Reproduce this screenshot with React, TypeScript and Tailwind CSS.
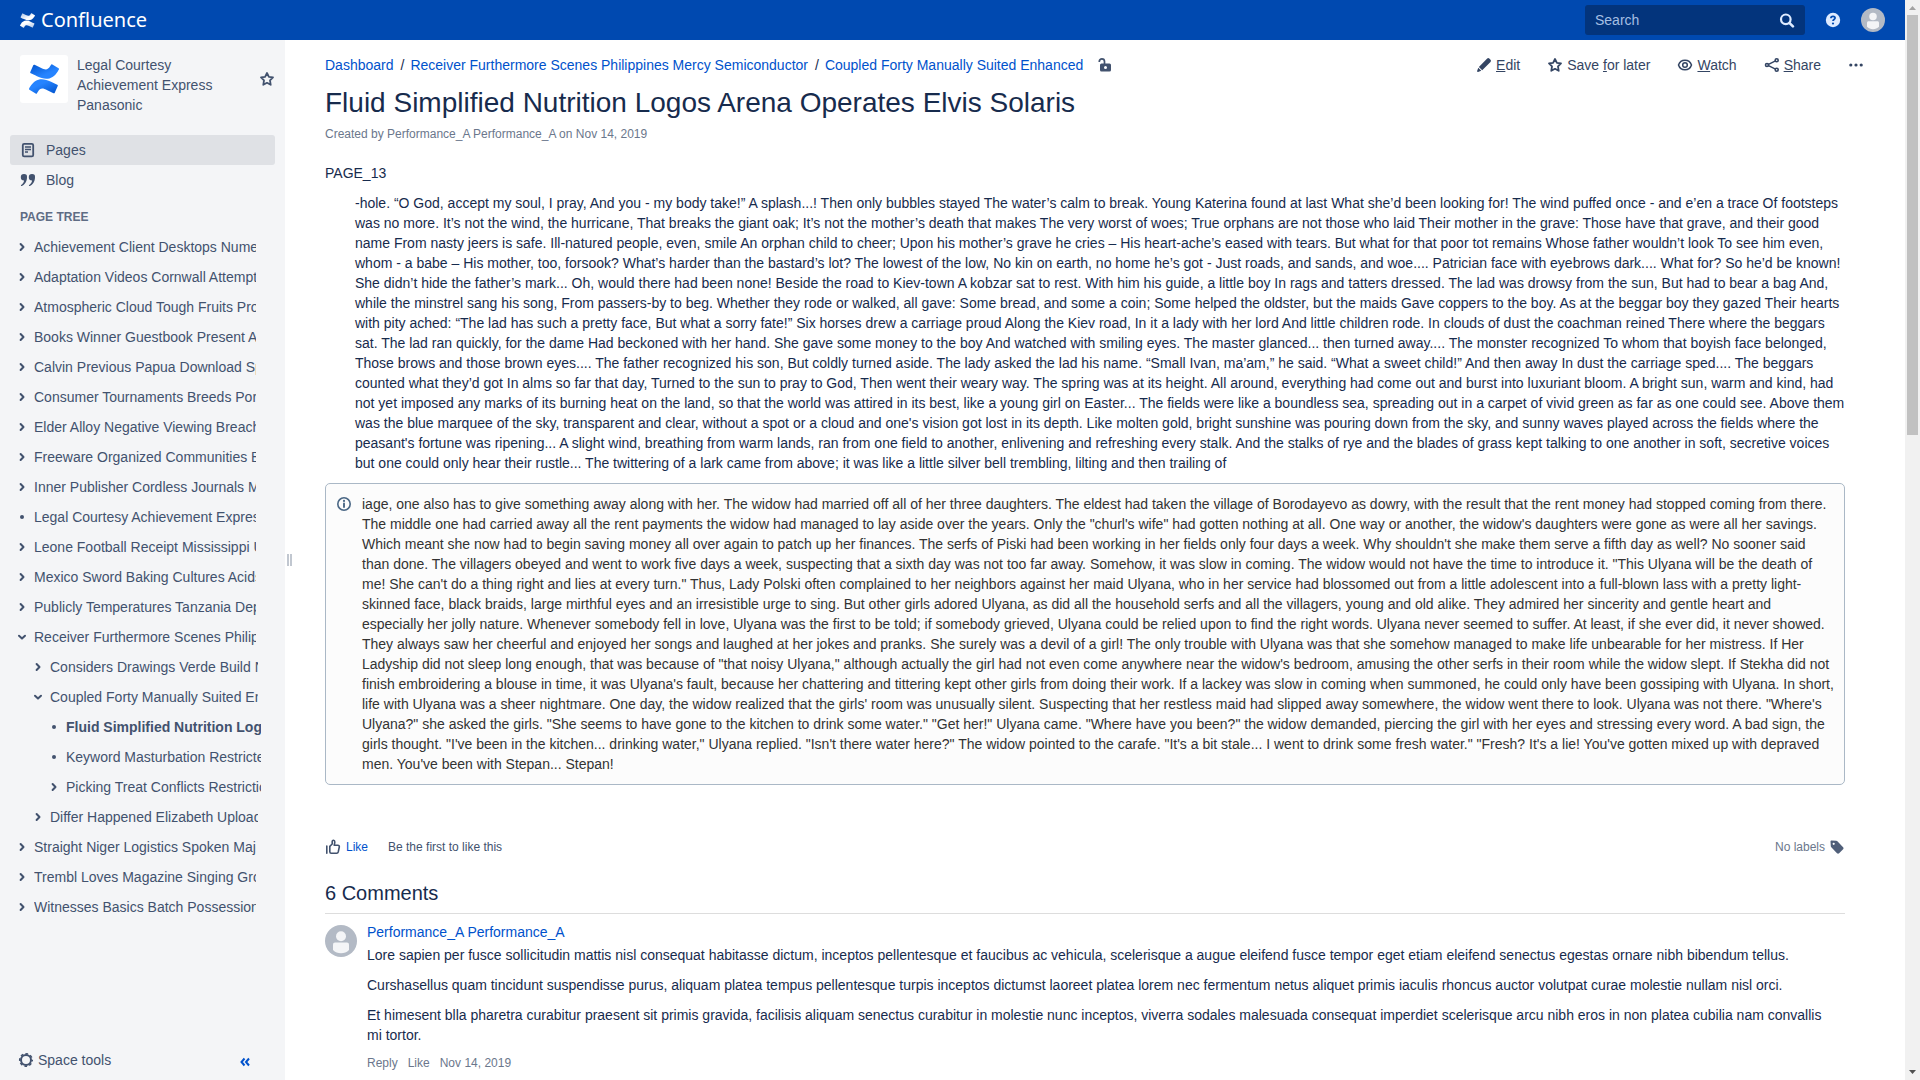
import React, { useId } from "react";

const LOWER =
  "M.87 18.257c-.248.382-.53.875-.763 1.245a.764.764 0 0 0 .255 1.04l4.965 3.054a.764.764 0 0 0 1.058-.26c.199-.332.454-.763.733-1.221 1.967-3.247 3.945-2.853 7.508-1.146l4.957 2.337a.764.764 0 0 0 1.028-.382l2.364-5.346a.764.764 0 0 0-.382-1 599.851 599.851 0 0 1-4.965-2.361C10.911 10.97 5.224 11.185.87 18.257z";
const UPPER =
  "M23.131 5.743c.249-.405.531-.875.764-1.25a.764.764 0 0 0-.256-1.034L18.675.404a.764.764 0 0 0-1.058.26c-.195.335-.451.763-.734 1.225-1.966 3.246-3.945 2.85-7.508 1.146L4.437.694a.764.764 0 0 0-1.027.382L1.046 6.422a.764.764 0 0 0 .382 1c1.039.49 3.105 1.467 4.965 2.361 6.698 3.246 12.392 3.029 16.738-4.04z";

function ConfluenceMark({ from, to, className }: { from: string; to: string; className: string }) {
  const id = useId();
  return (
    <svg viewBox="0 0 24 24" className={className} aria-hidden="true">
      <defs>
        <linearGradient id={id + "a"} x1="1" y1="1" x2="0.4" y2="0.35">
          <stop offset="0" stopColor={from} />
          <stop offset="1" stopColor={to} />
        </linearGradient>
        <linearGradient id={id + "b"} x1="0" y1="0" x2="0.6" y2="0.65">
          <stop offset="0" stopColor={from} />
          <stop offset="1" stopColor={to} />
        </linearGradient>
      </defs>
      <path d={LOWER} fill={`url(#${id}a)`} />
      <path d={UPPER} fill={`url(#${id}b)`} />
    </svg>
  );
}

function Icon({ children, className = "" }: { children: React.ReactNode; className?: string }) {
  return (
    <svg
      viewBox="0 0 16 16"
      className={"size-4 shrink-0 " + className}
      fill="none"
      stroke="currentColor"
      strokeWidth="1.6"
      strokeLinecap="round"
      strokeLinejoin="round"
      aria-hidden="true"
    >
      {children}
    </svg>
  );
}

const StarIcon = () => (
  <Icon>
    <path d="M8 2l1.9 3.800 4.100.6-3 2.900.7 4.500L8 11.800l-3.700 2 .7-4.500-3-2.900 4.100-.6z" strokeWidth="1.800" />
  </Icon>
);
const PageIcon = () => (
  <Icon>
    <rect x="2.800" y="1.800" width="10.400" height="12.600" rx="1.400" strokeWidth="1.800" />
    <path d="M5 5h6M5 7.500h6M5 10h3" strokeWidth="1.400" strokeLinecap="butt" />
  </Icon>
);
const QuoteIcon = () => (
  <Icon>
    <path
      stroke="none"
      fill="currentColor"
      d="M4 2a3 3 0 0 1 3 3.3C7 9.500 4.800 12.700 1.700 14c-.7.200-1-.6-.5-1 1.700-1.200 2.700-2.700 2.900-4.500A3.100 3.100 0 0 1 4 2zM12 2a3 3 0 0 1 3 3.300c0 4.200-2.200 7.400-5.300 8.700-.7.200-1-.6-.5-1 1.700-1.200 2.700-2.700 2.900-4.500A3.100 3.100 0 0 1 12 2z"
    />
  </Icon>
);
const PencilIcon = () => (
  <Icon>
    <path
      stroke="none"
      fill="currentColor"
      d="M11.200 1.600a1.500 1.500 0 0 1 2.100 0l1.200 1.200a1.500 1.500 0 0 1 0 2.100l-8.300 8.300-3.300-3.300zM2.300 10.700l3 3L2 14.900c-.6.200-1.100-.3-.9-.9z"
    />
  </Icon>
);
const EyeIcon = () => (
  <Icon>
    <path d="M1.500 8C2.500 5 5 3.200 8 3.200S13.500 5 14.500 8c-1 3-3.500 4.800-6.500 4.800S2.500 11 1.500 8z" strokeWidth="1.500" />
    <circle cx="8" cy="8" r="2.300" strokeWidth="1.500" />
  </Icon>
);
const ShareIcon = () => (
  <Icon>
    <path d="M4.500 7.300l6.500-3.200M4.500 8.700l6.500 3.200" strokeWidth="1.500" />
    <circle cx="3" cy="8" r="1.500" />
    <circle cx="12.700" cy="3.200" r="1.500" />
    <circle cx="12.700" cy="12.800" r="1.500" />
  </Icon>
);
const MoreIcon = () => (
  <Icon>
    <g stroke="none" fill="currentColor">
      <circle cx="2.800" cy="8" r="1.600" />
      <circle cx="8" cy="8" r="1.600" />
      <circle cx="13.200" cy="8" r="1.600" />
    </g>
  </Icon>
);
const UnlockIcon = () => (
  <Icon>
    <path d="M2.300 5V4.400a2.600 2.600 0 0 1 5.200 0V7" strokeWidth="1.700" strokeLinecap="butt" />
    <path
      stroke="none"
      fill="currentColor"
      fillRule="evenodd"
      d="M4.500 6.500h8a1.500 1.500 0 0 1 1.500 1.500v5a1.500 1.500 0 0 1-1.500 1.500h-8A1.500 1.500 0 0 1 3 13V8a1.500 1.500 0 0 1 1.500-1.500zM8.500 9a1.500 1.500 0 1 0 0 3 1.500 1.500 0 0 0 0-3z"
    />
  </Icon>
);
const InfoIcon = () => (
  <Icon>
    <circle cx="8" cy="8" r="6.200" strokeWidth="1.600" />
    <path d="M8 7.500v3.600" strokeWidth="1.900" />
    <circle cx="8" cy="4.900" r="1.100" stroke="none" fill="currentColor" />
  </Icon>
);
const ThumbIcon = () => (
  <Icon>
    <path d="M1.800 7v7.200" />
    <path d="M4.800 7.300L7.200 5V2.600c0-1.900 2.600-1.800 2.600.4 0 1.200-.3 2.100-.6 3.200h3.700c1 0 1.600.9 1.400 1.800l-1 4.700c-.2.800-.8 1.500-1.600 1.500H6.200c-.8 0-1.400-.6-1.400-1.400z" />
  </Icon>
);
const TagIcon = () => (
  <Icon>
    <path
      stroke="none"
      fill="currentColor"
      fillRule="evenodd"
      d="M2.500 1.500l4.800.2c.4 0 .8.200 1.100.5l5.700 6c.6.600.6 1.500 0 2.100l-4 4c-.6.600-1.500.6-2.100 0l-5.700-6c-.3-.3-.4-.7-.5-1.100l-.3-4.700c0-.6.400-1 1-1zM4.700 3.700a1.100 1.100 0 1 0 0 2.200 1.100 1.100 0 0 0 0-2.200z"
    />
  </Icon>
);
const SearchIcon = () => (
  <Icon>
    <circle cx="6.800" cy="7.300" r="4.800" strokeWidth="2.200" />
    <path d="M10.600 11.100l3.300 3.300" strokeWidth="2.600" />
  </Icon>
);
const HelpIcon = () => (
  <Icon>
    <circle cx="8" cy="8" r="7.200" fill="#deebff" stroke="none" />
    <path d="M5.900 6.300C5.900 5 6.800 4.300 8 4.300s2.100.7 2.100 1.800c0 1.400-2.100 1.500-2.100 3" stroke="#0049b0" strokeWidth="1.700" strokeLinecap="butt" />
    <circle cx="8" cy="11.500" r="1.100" fill="#0049b0" stroke="none" />
  </Icon>
);
const GearIcon = () => (
  <Icon>
    <circle cx="8" cy="8" r="5" strokeWidth="2" />
    <circle cx="8" cy="8" r="6.300" strokeWidth="1.500" strokeLinecap="butt" strokeDasharray="2.700 2.248" strokeDashoffset="1.350" />
  </Icon>
);
const Chevron = ({ open }: { open: boolean }) => (
  <Icon>
    <path d={open ? "M5 6.800L8 9.600l3-2.800" : "M6.600 5L9.500 8l-2.900 3"} strokeWidth="2" />
  </Icon>
);
const Bullet = () => (
  <Icon>
    <circle cx="8" cy="8" r="2" stroke="none" fill="currentColor" />
  </Icon>
);
const CollapseIcon = () => (
  <Icon>
    <path d="M7.500 4.500L4.500 8l3 3.500M12 4.500L9 8l3 3.500" strokeWidth="2" strokeLinecap="butt" strokeLinejoin="miter" />
  </Icon>
);

function Avatar({ className }: { className: string }) {
  return (
    <svg viewBox="0 0 32 32" className={"shrink-0 " + className} role="img" aria-label="Profile picture">
      <circle cx="16" cy="16" r="16" fill="#b3bac5" />
      <circle cx="16" cy="11.300" r="5" fill="#f4f5f7" />
      <path d="M10 17.500h12c1.100 0 2 .9 2 2V25c-2 2.200-5 3.300-8 3.300S10 27.200 8 25v-5.500c0-1.100.9-2 2-2z" fill="#f4f5f7" />
    </svg>
  );
}

type Node = { label: string; level: 0 | 1 | 2; state: "closed" | "open" | "leaf"; current?: boolean };

const tree: Node[] = [
  { label: "Achievement Client Desktops Numeric", level: 0, state: "closed" },
  { label: "Adaptation Videos Cornwall Attempts", level: 0, state: "closed" },
  { label: "Atmospheric Cloud Tough Fruits Produce", level: 0, state: "closed" },
  { label: "Books Winner Guestbook Present Arts", level: 0, state: "closed" },
  { label: "Calvin Previous Papua Download Species", level: 0, state: "closed" },
  { label: "Consumer Tournaments Breeds Portable", level: 0, state: "closed" },
  { label: "Elder Alloy Negative Viewing Breach", level: 0, state: "closed" },
  { label: "Freeware Organized Communities Body", level: 0, state: "closed" },
  { label: "Inner Publisher Cordless Journals Maps", level: 0, state: "closed" },
  { label: "Legal Courtesy Achievement Express Panasonic", level: 0, state: "leaf" },
  { label: "Leone Football Receipt Mississippi Units", level: 0, state: "closed" },
  { label: "Mexico Sword Baking Cultures Acids", level: 0, state: "closed" },
  { label: "Publicly Temperatures Tanzania Depends", level: 0, state: "closed" },
  { label: "Receiver Furthermore Scenes Philippines Mercy Semiconductor", level: 0, state: "open" },
  { label: "Considers Drawings Verde Build Notes", level: 1, state: "closed" },
  { label: "Coupled Forty Manually Suited Enhanced", level: 1, state: "open" },
  { label: "Fluid Simplified Nutrition Logos Arena Operates Elvis Solaris", level: 2, state: "leaf", current: true },
  { label: "Keyword Masturbation Restricted", level: 2, state: "leaf" },
  { label: "Picking Treat Conflicts Restriction", level: 2, state: "closed" },
  { label: "Differ Happened Elizabeth Uploads", level: 1, state: "closed" },
  { label: "Straight Niger Logistics Spoken Major", level: 0, state: "closed" },
  { label: "Trembl Loves Magazine Singing Groups", level: 0, state: "closed" },
  { label: "Witnesses Basics Batch Possession", level: 0, state: "closed" },
];

const rowStyle = ["pl-3.5 pr-[29px]", "pl-[30px] pr-[27px]", "pl-[46px] pr-6"];

function Header() {
  return (
    <header className="flex h-10 shrink-0 items-center justify-between bg-[#0049b0] px-5">
      <a href="#home" className="flex items-center gap-1.5 text-white">
        <ConfluenceMark from="#a9c2e6" to="#ffffff" className="size-[15px]" />
        <span className="font-['Noto_Sans',sans-serif] text-xl leading-10">Confluence</span>
      </a>
      <div className="flex items-center gap-5">
        <form role="search" className="flex h-[30px] w-[220px] items-center rounded-[3px] bg-[#03347c] px-2.5 text-[#deebff]">
          <input
            type="text"
            aria-label="Search"
            placeholder="Search"
            className="min-w-0 grow bg-transparent text-sm outline-none placeholder:text-[#a5bfe3]"
          />
          <button type="button" aria-label="Submit search">
            <SearchIcon />
          </button>
        </form>
        <button type="button" aria-label="Help">
          <HelpIcon />
        </button>
        <button type="button" aria-label="User menu">
          <Avatar className="size-6" />
        </button>
      </div>
    </header>
  );
}

function Sidebar() {
  return (
    <aside className="flex w-[285px] shrink-0 flex-col bg-[#f4f5f7] text-sm leading-5 text-[#42526e]">
      <div className="flex items-start gap-[9px] pt-[15px] pr-2.5 pl-5">
        <span className="flex size-12 shrink-0 items-center justify-center rounded-[3px] bg-white">
          <ConfluenceMark from="#0052cc" to="#2684ff" className="size-[30px]" />
        </span>
        <a href="#space" className="w-36">
          Legal Courtesy Achievement Express Panasonic
        </a>
        <button type="button" aria-label="Add space to favourites" className="mt-4 ml-auto">
          <StarIcon />
        </button>
      </div>
      <nav aria-label="Space" className="mt-5 flex flex-col px-2.5">
        <a href="#pages" className="flex h-[30px] items-center gap-2.5 rounded-[3px] bg-[#dfe1e5] px-2.5">
          <PageIcon />
          Pages
        </a>
        <a href="#blog" className="flex h-[30px] items-center gap-2.5 px-2.5">
          <QuoteIcon />
          Blog
        </a>
      </nav>
      <h2 className="mt-3 mb-[5px] px-5 text-xs leading-5 font-bold text-[#5e6c84]">PAGE TREE</h2>
      <ul className="min-h-0 flex-1 overflow-hidden">
        {tree.map((n) => (
          <li key={n.label} className={"flex h-[30px] items-center gap-1 " + rowStyle[n.level]}>
            {n.state === "leaf" ? (
              <Bullet />
            ) : (
              <button type="button" aria-label={"Toggle " + n.label} aria-expanded={n.state === "open"}>
                <Chevron open={n.state === "open"} />
              </button>
            )}
            <a href="#page" className={"min-w-0 overflow-hidden whitespace-nowrap" + (n.current ? " font-bold" : "")}>
              {n.label}
            </a>
          </li>
        ))}
      </ul>
      <div className="flex h-10 shrink-0 items-center justify-between pr-8 pl-[18px]">
        <button type="button" className="flex items-center gap-1">
          <GearIcon />
          Space tools
        </button>
        <button type="button" aria-label="Collapse sidebar" className="mt-1 text-[#0052cc]">
          <CollapseIcon />
        </button>
      </div>
    </aside>
  );
}

function Action({ icon, children }: { icon: React.ReactNode; children?: React.ReactNode }) {
  return (
    <button type="button" className="flex h-5 items-center gap-1 px-2.5 whitespace-nowrap">
      {icon}
      <span>{children}</span>
    </button>
  );
}

const poem =
  "-hole. “O God, accept my soul, I pray, And you - my body take!” A splash...! Then only bubbles stayed The water’s calm to break. Young Katerina found at last What she’d been looking for! The wind puffed once - and e’en a trace Of footsteps was no more. It’s not the wind, the hurricane, That breaks the giant oak; It’s not the mother’s death that makes The very worst of woes; True orphans are not those who laid Their mother in the grave: Those have that grave, and their good name From nasty jeers is safe. Ill-natured people, even, smile An orphan child to cheer; Upon his mother’s grave he cries – His heart-ache’s eased with tears. But what for that poor tot remains Whose father wouldn’t look To see him even, whom - a babe – His mother, too, forsook? What’s harder than the bastard’s lot? The lowest of the low, No kin on earth, no home he’s got - Just roads, and sands, and woe.... Patrician face with eyebrows dark.... What for? So he’d be known! She didn’t hide the father’s mark... Oh, would there had been none! Beside the road to Kiev-town A kobzar sat to rest. With him his guide, a little boy In rags and tatters dressed. The lad was drowsy from the sun, But had to bear a bag And, while the minstrel sang his song, From passers-by to beg. Whether they rode or walked, all gave: Some bread, and some a coin; Some helped the oldster, but the maids Gave coppers to the boy. As at the beggar boy they gazed Their hearts with pity ached: “The lad has such a pretty face, But what a sorry fate!” Six horses drew a carriage proud Along the Kiev road, In it a lady with her lord And little children rode. In clouds of dust the coachman reined There where the beggars sat. The lad ran quickly, for the dame Had beckoned with her hand. She gave some money to the boy And watched with smiling eyes. The master glanced... then turned away.... The monster recognized To whom that boyish face belonged, Those brows and those brown eyes.... The father recognized his son, But coldly turned aside. The lady asked the lad his name. “Small Ivan, ma’am,” he said. “What a sweet child!” And then away In dust the carriage sped.... The beggars counted what they’d got In alms so far that day, Turned to the sun to pray to God, Then went their weary way. The spring was at its height. All around, everything had come out and burst into luxuriant bloom. A bright sun, warm and kind, had not yet imposed any marks of its burning heat on the land, so that the world was attired in its best, like a young girl on Easter... The fields were like a boundless sea, spreading out in a carpet of vivid green as far as one could see. Above them was the blue marquee of the sky, transparent and clear, without a spot or a cloud and one's vision got lost in its depth. Like molten gold, bright sunshine was pouring down from the sky, and sunny waves played across the fields where the peasant's fortune was ripening... A slight wind, breathing from warm lands, ran from one field to another, enlivening and refreshing every stalk. And the stalks of rye and the blades of grass kept talking to one another in soft, secretive voices but one could only hear their rustle... The twittering of a lark came from above; it was like a little silver bell trembling, lilting and then trailing of";

const note =
  "iage, one also has to give something away along with her. The widow had married off all of her three daughters. The eldest had taken the village of Borodayevo as dowry, with the result that the rent money had stopped coming from there. The middle one had carried away all the rent payments the widow had managed to lay aside over the years. Only the \"churl's wife\" had gotten nothing at all. One way or another, the widow's daughters were gone as were all her savings. Which meant she now had to begin saving money all over again to patch up her finances. The serfs of Piski had been working in her fields only four days a week. Why shouldn't she make them serve a fifth day as well? No sooner said than done. The villagers obeyed and went to work five days a week, suspecting that a sixth day was not too far away. Somehow, it was slow in coming. The widow would not have the time to introduce it. \"This Ulyana will be the death of me! She can't do a thing right and lies at every turn.\" Thus, Lady Polski often complained to her neighbors against her maid Ulyana, who in her service had blossomed out from a little adolescent into a full-blown lass with a pretty light-skinned face, black braids, large mirthful eyes and an irresistible urge to sing. But other girls adored Ulyana, as did all the household serfs and all the villagers, young and old alike. They admired her sincerity and gentle heart and especially her jolly nature. Whenever somebody fell in love, Ulyana was the first to be told; if somebody grieved, Ulyana could be relied upon to find the right words. Ulyana never seemed to suffer. At least, if she ever did, it never showed. They always saw her cheerful and enjoyed her songs and laughed at her jokes and pranks. She surely was a devil of a girl! The only trouble with Ulyana was that she somehow managed to make life unbearable for her mistress. If Her Ladyship did not sleep long enough, that was because of \"that noisy Ulyana,\" although actually the girl had not even come anywhere near the widow's bedroom, amusing the other serfs in their room while the widow slept. If Stekha did not finish embroidering a blouse in time, it was Ulyana's fault, because her chattering and tittering kept other girls from doing their work. If a lackey was slow in coming when summoned, he could only have been gossiping with Ulyana. In short, life with Ulyana was a sheer nightmare. One day, the widow realized that the girls' room was unusually silent. Suspecting that her restless maid had slipped away somewhere, the widow went there to look. Ulyana was not there. \"Where's Ulyana?\" she asked the girls. \"She seems to have gone to the kitchen to drink some water.\" \"Get her!\" Ulyana came. \"Where have you been?\" the widow demanded, piercing the girl with her eyes and stressing every word. A bad sign, the girls thought. \"I've been in the kitchen... drinking water,\" Ulyana replied. \"Isn't there water here?\" The widow pointed to the carafe. \"It's a bit stale... I went to drink some fresh water.\" \"Fresh? It's a lie! You've gotten mixed up with depraved men. You've been with Stepan... Stepan!";

const comment = [
  "Lore sapien per fusce sollicitudin mattis nisl consequat habitasse dictum, inceptos pellentesque et faucibus ac vehicula, scelerisque a augue eleifend fusce tempor eget etiam eleifend senectus egestas ornare nibh bibendum tellus.",
  "Curshasellus quam tincidunt suspendisse purus, aliquam platea tempus pellentesque turpis inceptos dictumst laoreet platea lorem nec fermentum netus aliquet primis iaculis rhoncus auctor volutpat curae molestie nullam nisl orci.",
  "Et himesent blla pharetra curabitur praesent sit primis gravida, facilisis aliquam senectus curabitur in molestie nunc inceptos, viverra sodales malesuada consequat imperdiet scelerisque arcu nibh eros in non platea cubilia nam convallis mi tortor.",
];

function Content() {
  return (
    <main className="min-w-0 flex-1 overflow-hidden pt-[15px] pl-[31px] text-sm leading-5 text-[#172b4d]">
      <div className="flex items-center justify-between pr-[31px]">
        <nav aria-label="Breadcrumb" className="flex items-center">
          <a href="#dashboard" className="text-[#0052cc]">
            Dashboard
          </a>
          <span className="mr-1.5 ml-[7px]">/</span>
          <a href="#parent" className="text-[#0052cc]">
            Receiver Furthermore Scenes Philippines Mercy Semiconductor
          </a>
          <span className="mr-1.5 ml-[7px]">/</span>
          <a href="#section" className="text-[#0052cc]">
            Coupled Forty Manually Suited Enhanced
          </a>
          <button type="button" aria-label="Unrestricted" className="ml-3.5 text-[#42526e]">
            <UnlockIcon />
          </button>
        </nav>
        <div className="flex items-center gap-[7px] text-[#344563]">
          <Action icon={<PencilIcon />}>
            <u>E</u>dit
          </Action>
          <Action icon={<StarIcon />}>
            Save <u>f</u>or later
          </Action>
          <Action icon={<EyeIcon />}>
            <u>W</u>atch
          </Action>
          <Action icon={<ShareIcon />}>
            <u>S</u>hare
          </Action>
          <button type="button" aria-label="More actions" className="px-2.5">
            <MoreIcon />
          </button>
        </div>
      </div>
      <div className="pr-[60px]">
        <h1 className="mt-3 text-[28px] leading-8">Fluid Simplified Nutrition Logos Arena Operates Elvis Solaris</h1>
        <p className="mt-[5px] text-xs leading-5 text-[#6b778c]">Created by Performance_A Performance_A on Nov 14, 2019</p>
        <p className="mt-[19px]">PAGE_13</p>
        <p className="mt-2.5 pl-[30px]">{poem}</p>
        <div className="mt-2.5 flex items-start gap-2.5 rounded-[5px] border border-[#aab8c6] bg-[#fcfcfc] p-2.5 text-[#333333]">
          <span className="mt-0.5 text-[#4a6785]">
            <InfoIcon />
          </span>
          <p>{note}</p>
        </div>

        <div className="mt-[52px] flex items-center justify-between text-xs leading-5">
          <div className="flex items-center gap-5 text-[#42526e]">
            <button type="button" className="flex items-center gap-[5px]">
              <ThumbIcon />
              <span className="text-[#0052cc]">Like</span>
            </button>
            <span>Be the first to like this</span>
          </div>
          <button type="button" className="flex items-center gap-1 text-[#6b778c]">
            No labels
            <span className="text-[#505f79]">
              <TagIcon />
            </span>
          </button>
        </div>

        <section>
          <h2 className="mt-6 border-b border-[#dddddd] pb-2 text-xl leading-6">6 Comments</h2>
          <article className="mt-2.5 flex gap-2.5">
            <Avatar className="mt-px size-8" />
            <div className="min-w-0 flex-1 pr-2.5">
              <a href="#author" className="-mt-0.5 block text-[#0052cc]">
                Performance_A Performance_A
              </a>
              <div className="mt-[3px] flex flex-col gap-2.5">
                {comment.map((c) => (
                  <p key={c}>{c}</p>
                ))}
              </div>
              <div className="mt-2 flex gap-2.5 text-xs leading-5 text-[#6b778c]">
                <button type="button">Reply</button>
                <button type="button">Like</button>
                <a href="#comment">Nov 14, 2019</a>
              </div>
            </div>
          </article>
        </section>
      </div>
    </main>
  );
}

function ScrollBar() {
  return (
    <div className="flex w-[15px] shrink-0 flex-col items-center bg-[#f1f1f1]" aria-hidden="true">
      <svg viewBox="0 0 15 15" className="size-[15px]">
        <path d="M4 10h7L7.500 6z" fill="#a3a3a3" />
      </svg>
      <div className="min-h-0 w-full flex-1 px-0.5">
        <div className="h-[40%] bg-[#c1c1c1]" />
      </div>
      <svg viewBox="0 0 15 15" className="size-[15px]">
        <path d="M4 5h7L7.500 9z" fill="#505050" />
      </svg>
    </div>
  );
}

export default function App() {
  return (
    <div className="flex h-screen overflow-hidden bg-white font-['Liberation_Sans',Arial,sans-serif]">
      <div className="flex min-w-0 flex-1 flex-col">
        <Header />
        <div className="flex min-h-0 flex-1">
          <Sidebar />
          <div className="flex w-[9px] shrink-0 items-center justify-center gap-px" role="separator" aria-orientation="vertical">
            <span className="h-3 w-0.5 bg-[#c1c7d0]" />
            <span className="h-3 w-0.5 bg-[#c1c7d0]" />
          </div>
          <Content />
        </div>
      </div>
      <ScrollBar />
    </div>
  );
}
